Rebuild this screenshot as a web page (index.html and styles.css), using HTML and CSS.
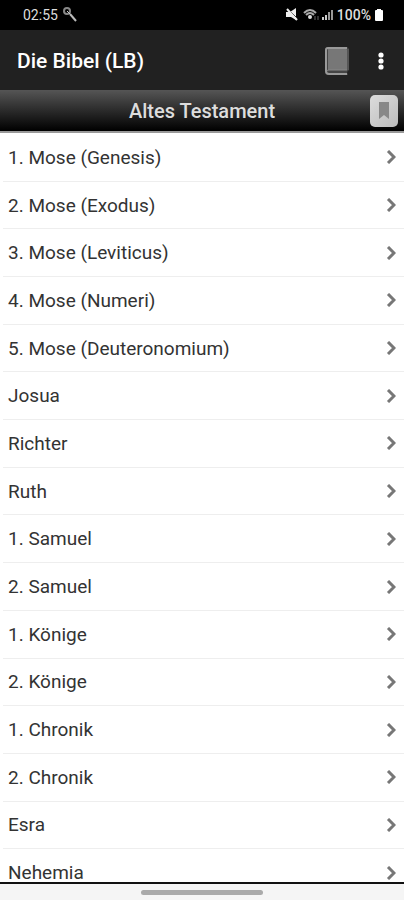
FILE: index.html
```
<!DOCTYPE html>
<html lang="de">
<head>
    <meta charset="UTF-8">
    <meta name="viewport" content="width=device-width, initial-scale=1.0">
    <title>Die Bibel (LB)</title>
    <link rel="stylesheet" href="styles.css">
</head>
<body>

    <!-- Status Bar -->
    <div class="status-bar">
        <div class="status-group">
            <span>02:55</span>
            <svg class="tool-icon" viewBox="0 0 16 16" width="16" height="16" fill="none" stroke="#bbb">
                <circle cx="5" cy="4" r="3" stroke-width="2" stroke="#888"/>
                <path d="M5 4l3 3" stroke-width="1" stroke="#ccc"/>
                <path d="M8 7l6 7" stroke-width="2"/>
            </svg>
        </div>
        <div class="status-group status-right">
            <svg viewBox="0 0 12 14" width="12" height="14">
                <path d="M0 4h4l6-4v12L5 9H0z" fill="#eee"/>
                <path d="M2 1l10 10" stroke="#000" stroke-width="1"/>
                <path d="M1 1l10 11" stroke="#eee" stroke-width="2"/>
            </svg>
            <svg class="wifi-icon" viewBox="0 0 16 14" width="16" height="14" fill="none" stroke="#aaa" stroke-width="2">
                <path d="M1 5q6-6 12 0"/>
                <path d="M3 7q4-4 8 0"/>
                <circle cx="7" cy="9" r="1" fill="#ddd" stroke="#ddd"/>
                <path d="M12 8v4M15 8v4" stroke="#666" stroke-width="1"/>
            </svg>
            <svg viewBox="0 0 12 14" width="12" height="14">
                <path d="M0 9h2v3H0zM3 7h2v5H3z" fill="#ccc"/>
                <path d="M6 4h2v8H6zM9 2h2v10H9z" fill="#999"/>
            </svg>
            <span class="battery-text">100%</span>
            <svg viewBox="0 0 10 14" width="10" height="14">
                <path d="M3 1h4v1h1q1 0 1 1v9q0 1-1 1H2q-1 0-1-1V3q0-1 1-1h1z" fill="#fff"/>
            </svg>
        </div>
    </div>

    <!-- App Bar -->
    <header class="app-bar">
        <h1>Die Bibel (LB)</h1>
        <button class="icon-button" aria-label="Buch">
            <svg viewBox="0 0 28 32" width="28" height="32">
                <path d="M5 2h18q3 0 3 3v20l-2 2 1 3H5q-3 0-3-3V5q0-3 3-3z" fill="#444"/>
                <path d="M5 3h17q2 0 2 2v20H5z" fill="#777"/>
                <path d="M24 3H5Q3 3 3 5v21q0 3 3 3h18" fill="none" stroke="#999" stroke-width="2"/>
                <path d="M4 26q0-1 2-1h18" fill="none" stroke="#888" stroke-width="1"/>
                <path d="M25 4v21" stroke="#555" stroke-width="2"/>
            </svg>
        </button>
        <button class="icon-button menu-button" aria-label="Menü">
            <svg viewBox="0 0 8 20" width="8" height="20" fill="#fff">
                <circle cx="4" cy="4" r="2.6"/>
                <circle cx="4" cy="10" r="2.6"/>
                <circle cx="4" cy="16" r="2.6"/>
            </svg>
        </button>
    </header>

    <!-- Section Title -->
    <div class="section-bar">
        <h2>Altes Testament</h2>
        <button class="bookmark-button" aria-label="Lesezeichen">
            <svg viewBox="0 0 12 18" width="12" height="18">
                <path d="M1 0h10v17l-5-4-5 4z" fill="#888"/>
            </svg>
        </button>
    </div>

    <!-- Book List -->
    <main class="content">
        <ul id="book-list" class="book-list">
            <!-- Books are added by the script -->
        </ul>
    </main>

    <!-- Navigation Bar -->
    <div class="nav-bar">
        <div class="nav-handle"></div>
    </div>

    <script>
        const books = [
            '1. Mose (Genesis)', '2. Mose (Exodus)', '3. Mose (Leviticus)',
            '4. Mose (Numeri)', '5. Mose (Deuteronomium)', 'Josua', 'Richter', 'Ruth',
            '1. Samuel', '2. Samuel', '1. Könige', '2. Könige',
            '1. Chronik', '2. Chronik', 'Esra', 'Nehemia'
        ];

        const bookList = document.getElementById('book-list');
        books.forEach((book) => {
            const listItem = document.createElement('li');
            listItem.innerHTML = `
                <a href="#">
                    <span>${book}</span>
                    <svg viewBox="0 0 10 14" width="10" height="14" fill="none" stroke="#777" stroke-width="3">
                        <path d="M2 1l6 6-6 6"/>
                    </svg>
                </a>
            `;
            bookList.appendChild(listItem);
        });
    </script>

</body>
</html>
```
FILE: styles.css
```
* {
    box-sizing: border-box;
}
body {
    font-family: Roboto, sans-serif;
    margin: 0;
    height: 100vh;
    display: flex;
    flex-direction: column;
    background-color: white;
}
h1, h2 {
    margin: 0;
}
button {
    padding: 0;
    border: none;
    background: none;
    cursor: pointer;
}
svg {
    display: block;
    flex: none;
}
.status-bar {
    display: flex;
    flex: none;
    justify-content: space-between;
    align-items: center;
    height: 30px;
    padding: 0 20px 0 23px;
    background-color: #000;
    color: #ddd;
    font-size: 14px;
}
.status-group {
    display: flex;
    align-items: center;
    gap: 4px;
}
.status-right {
    gap: 3px;
    font-weight: 500;
}
.wifi-icon {
    margin-left: 2px;
}
.app-bar {
    display: flex;
    flex: none;
    align-items: center;
    height: 60px;
    padding: 2px 17px 0;
    background-color: #212121;
    color: #fff;
}
.app-bar h1 {
    flex: 1;
    font-size: 21px;
    font-weight: 500;
}
.menu-button {
    margin-left: 24px;
    padding: 0 2px;
}
.section-bar {
    display: grid;
    flex: none;
    grid-template-columns: 1fr auto 1fr;
    align-items: center;
    height: 43px;
    padding: 1px 6px 0;
    border-bottom: 2px solid #999;
    background: linear-gradient(#555, #000);
    color: #ddd;
}
.section-bar h2 {
    grid-column: 2;
    font-size: 20px;
    font-weight: 500;
}
.bookmark-button {
    display: flex;
    justify-content: center;
    align-items: center;
    justify-self: end;
    width: 28px;
    height: 32px;
    border-radius: 5px;
    background: linear-gradient(135deg, #ddd, #bbb);
}
.content {
    flex: 1;
    min-height: 0;
    padding-top: 1px;
    overflow: hidden;
}
.book-list {
    display: grid;
    grid-auto-rows: 1fr;
    min-height: 102%;
    margin: 0;
    padding: 0 0 0 3px;
    list-style-type: none;
}
.book-list li {
    border-bottom: 1px solid #eee;
}
.book-list a {
    display: flex;
    justify-content: space-between;
    align-items: center;
    height: 100%;
    min-height: 46px;
    padding: 0 8px 0 5px;
    color: #333;
    font-size: 19px;
    font-weight: 400;
    text-decoration: none;
}
.nav-bar {
    display: flex;
    flex: none;
    justify-content: center;
    height: 18px;
    padding-top: 6px;
    border-top: 2px solid #111;
    background-color: #f5f5f5;
}
.nav-handle {
    width: 30%;
    height: 5px;
    border-radius: 3px;
    background-color: #aaa;
}
```
